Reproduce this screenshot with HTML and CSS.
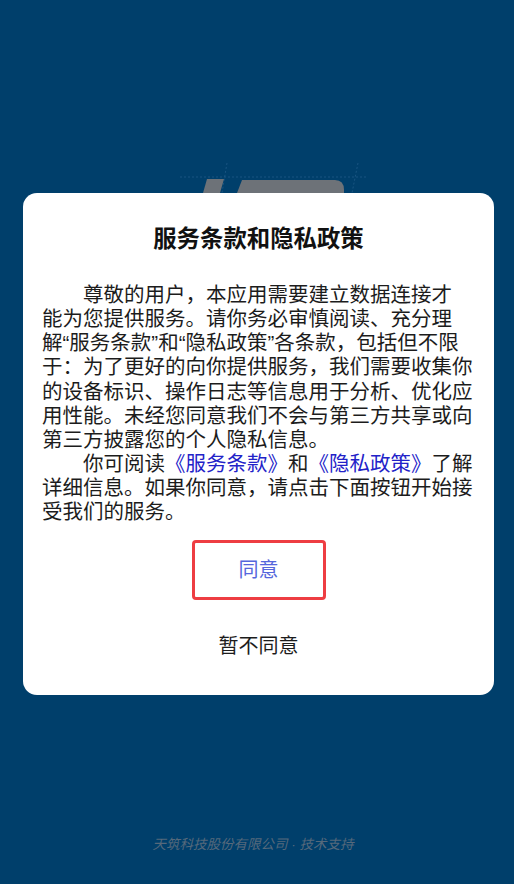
FILE: index.html
```html
<!DOCTYPE html>
<html lang="zh-CN">
<head>
<meta charset="utf-8">
<title>服务条款和隐私政策</title>
<link rel="stylesheet" href="styles.css">
</head>
<body>
<main class="screen">
  <svg class="logo" width="260" height="34" viewBox="0 0 260 34" aria-hidden="true">
    <path class="logo-line" d="M50 17H236M97 3L92 33M228 3L222 33"/>
    <path class="logo-shape" d="M77 19H94L90 33H73Z"/>
    <path class="logo-shape" d="M112 20H205Q214 20 214 30V33H107Z"/>
  </svg>
  <section class="dialog">
    <h1 class="title">服务条款和隐私政策</h1>
    <div class="body">
      <p class="para">尊敬的用户，本应用需要建立数据连接才<br>能为您提供服务。请你务必审慎阅读、充分理<br>解“服务条款”和“隐私政策”各条款，包括但不限于：为了更好的向你提供服务，我们需要收集你的设备标识、操作日志等信息用于分析、优化应用性能。未经您同意我们不会与第三方共享或向第三方披露您的个人隐私信息。</p>
      <p class="para">你可阅读<a class="link">《服务条款》</a>和<a class="link">《隐私政策》</a>了解详细信息。如果你同意，请点击下面按钮开始接受我们的服务。</p>
    </div>
    <button class="agree">同意</button>
    <button class="decline">暂不同意</button>
  </section>
  <footer class="support">天筑科技股份有限公司 · 技术支持</footer>
</main>
</body>
</html>
```
FILE: styles.css
```css
* { box-sizing: border-box; }
html, body { margin: 0; height: 100%; }
body {
  background: #003f6b;
  font-family: "Liberation Sans", "Noto Sans CJK SC", sans-serif;
}
.screen {
  position: relative;
  height: 884px;
  overflow: hidden;
  padding: 193px 20px 0 23px;
  display: flex;
  flex-direction: column;
}
.logo { position: absolute; left: 130px; top: 160px; }
.logo-line { fill: none; stroke: #2a6390; stroke-width: .6; stroke-dasharray: 2 2; }
.logo-shape { fill: #6d7278; }
.dialog {
  position: relative;
  height: 502px;
  background: #fff;
  border-radius: 14px;
  padding: 29px 19px 0;
  display: flex;
  flex-direction: column;
  align-items: center;
}
.title {
  margin: 0;
  font-size: 23.4px;
  line-height: 34px;
  font-weight: 700;
  color: #111;
}
.body { margin-top: 27px; color: #1c1c1c; width: 100%; }
.para {
  margin: 0;
  font-size: 20.5px;
  line-height: 24.15px;
  text-indent: 41px;
  word-break: break-all;
}
.link { color: #2222c8; }
.agree {
  margin: 15px 0 0;
  width: 134px;
  height: 60px;
  background: #fff;
  border: 3px solid #ee3d42;
  border-radius: 4px;
  padding: 0 0 2px;
  color: #5566dc;
  font: inherit;
  font-size: 20px;
}
.decline {
  margin: 16px 0 0;
  padding: 0;
  height: 58px;
  background: none;
  border: 0;
  color: #1c1c1c;
  font: inherit;
  font-size: 20px;
}
.support {
  margin-top: 141px;
  text-align: center;
  padding-right: 11px;
  font-size: 13.5px;
  font-style: italic;
  line-height: 18px;
  color: #56697b;
}
```
